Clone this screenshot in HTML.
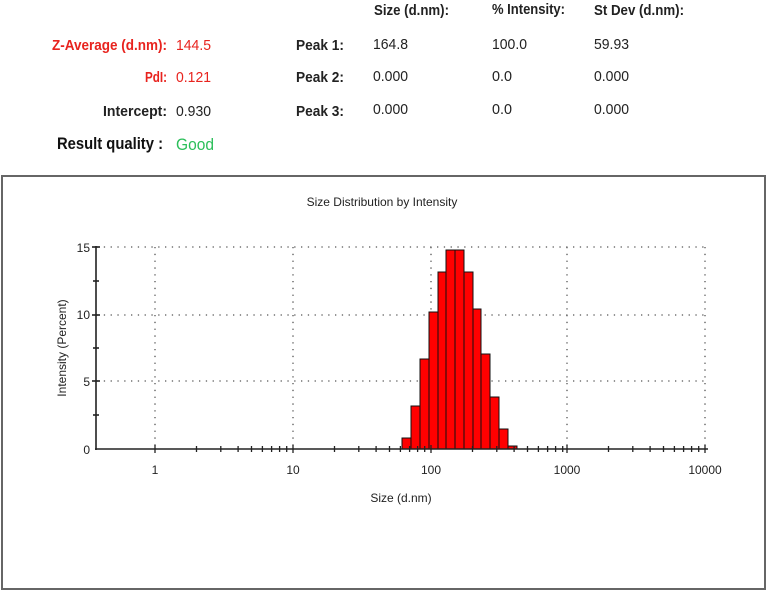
<!DOCTYPE html>
<html><head><meta charset="utf-8"><style>
html,body{margin:0;padding:0;background:#fff;width:767px;height:592px;overflow:hidden}
svg{display:block}
.t{font-family:"Liberation Sans",sans-serif;font-size:15px}
.b{font-weight:bold}
.c{font-family:"Liberation Sans",sans-serif;font-size:12px;fill:#222}
</style></head><body>
<svg width="767" height="592" viewBox="0 0 767 592" xmlns="http://www.w3.org/2000/svg">
<g class="t">
<text x="374" y="15" class="b" fill="#222" textLength="75" lengthAdjust="spacingAndGlyphs">Size (d.nm):</text>
<text x="492" y="14" class="b" fill="#222" textLength="73" lengthAdjust="spacingAndGlyphs">% Intensity:</text>
<text x="594" y="15" class="b" fill="#222" textLength="90" lengthAdjust="spacingAndGlyphs">St Dev (d.nm):</text>
<text x="52" y="50" class="b" fill="#e8231e" textLength="115" lengthAdjust="spacingAndGlyphs">Z-Average (d.nm):</text>
<text x="176" y="50" fill="#e8231e" textLength="35" lengthAdjust="spacingAndGlyphs">144.5</text>
<text x="145" y="82" class="b" fill="#e8231e" textLength="22" lengthAdjust="spacingAndGlyphs">PdI:</text>
<text x="176" y="82" fill="#e8231e" textLength="35" lengthAdjust="spacingAndGlyphs">0.121</text>
<text x="103" y="116" class="b" fill="#222" textLength="64" lengthAdjust="spacingAndGlyphs">Intercept:</text>
<text x="176" y="116" fill="#222" textLength="35" lengthAdjust="spacingAndGlyphs">0.930</text>
<text x="57" y="149" class="b" fill="#111" font-size="17" textLength="106" lengthAdjust="spacingAndGlyphs">Result quality :</text>
<text x="176" y="150" fill="#2bbf5a" font-size="17" textLength="38" lengthAdjust="spacingAndGlyphs">Good</text>
<text x="296" y="50" class="b" fill="#222" textLength="48" lengthAdjust="spacingAndGlyphs">Peak 1:</text>
<text x="296" y="82" class="b" fill="#222" textLength="48" lengthAdjust="spacingAndGlyphs">Peak 2:</text>
<text x="296" y="116" class="b" fill="#222" textLength="48" lengthAdjust="spacingAndGlyphs">Peak 3:</text>
<text x="373" y="49" fill="#222" textLength="35" lengthAdjust="spacingAndGlyphs">164.8</text><text x="492" y="49" fill="#222" textLength="35" lengthAdjust="spacingAndGlyphs">100.0</text><text x="594" y="49" fill="#222" textLength="35" lengthAdjust="spacingAndGlyphs">59.93</text>
<text x="373" y="81" fill="#222" textLength="35" lengthAdjust="spacingAndGlyphs">0.000</text><text x="492" y="81" fill="#222" textLength="20" lengthAdjust="spacingAndGlyphs">0.0</text><text x="594" y="81" fill="#222" textLength="35" lengthAdjust="spacingAndGlyphs">0.000</text>
<text x="373" y="114" fill="#222" textLength="35" lengthAdjust="spacingAndGlyphs">0.000</text><text x="492" y="114" fill="#222" textLength="20" lengthAdjust="spacingAndGlyphs">0.0</text><text x="594" y="114" fill="#222" textLength="35" lengthAdjust="spacingAndGlyphs">0.000</text>
</g>
<rect x="2" y="176" width="763" height="413" fill="none" stroke="#666" stroke-width="2"/>
<text x="382" y="206" class="c" text-anchor="middle">Size Distribution by Intensity</text>
<g stroke="#555" stroke-width="1.3" stroke-dasharray="1.3 5.5" fill="none">
<line x1="97" y1="247" x2="708" y2="247"/>
<line x1="97" y1="315" x2="708" y2="315"/>
<line x1="97" y1="381" x2="708" y2="381"/>
<line x1="155" y1="247" x2="155" y2="449"/>
<line x1="293" y1="247" x2="293" y2="449"/>
<line x1="431" y1="247" x2="431" y2="449"/>
<line x1="567" y1="247" x2="567" y2="449"/>
<line x1="705" y1="247" x2="705" y2="449"/>
</g>
<g fill="#ff0000" stroke="#111" stroke-width="1">
<rect x="402" y="438" width="9" height="11"/>
<rect x="411" y="406" width="9" height="43"/>
<rect x="420" y="359" width="9" height="90"/>
<rect x="429" y="312" width="9" height="137"/>
<rect x="438" y="272" width="8" height="177"/>
<rect x="446" y="250" width="9" height="199"/>
<rect x="455" y="250" width="9" height="199"/>
<rect x="464" y="272" width="9" height="177"/>
<rect x="473" y="309" width="8" height="140"/>
<rect x="481" y="354" width="9" height="95"/>
<rect x="490" y="397" width="9" height="52"/>
<rect x="499" y="429" width="9" height="20"/>
<rect x="508" y="446" width="9" height="3"/>
</g>
<g stroke="#222" stroke-width="1.6">
<line x1="96" y1="246" x2="96" y2="450"/>
<line x1="95" y1="449" x2="708" y2="449"/>
<line x1="92" y1="247" x2="100" y2="247"/>
<line x1="92" y1="315" x2="100" y2="315"/>
<line x1="92" y1="381" x2="100" y2="381"/>
<line x1="93" y1="281" x2="99" y2="281"/>
<line x1="93" y1="348" x2="99" y2="348"/>
<line x1="93" y1="415" x2="99" y2="415"/>
</g>
<g stroke="#222" stroke-width="1.3">
<path d="M155 445v8M196.5 446v6M220.8 446v6M238.1 446v6M251.5 446v6M262.4 446v6M271.6 446v6M279.6 446v6M286.7 446v6M293 445v8
M334.5 446v6M358.8 446v6M376.1 446v6M389.5 446v6M400.4 446v6M409.6 446v6M417.6 446v6M424.7 446v6M431 445v8
M472.5 446v6M496.8 446v6M514.1 446v6M527.5 446v6M538.4 446v6M547.6 446v6M555.6 446v6M562.7 446v6M567 445v8
M608.5 446v6M632.8 446v6M650.1 446v6M663.5 446v6M674.4 446v6M683.6 446v6M691.6 446v6M698.7 446v6M705 445v8"/>
</g>
<g class="c" text-anchor="end">
<text x="90" y="252">15</text><text x="90" y="319">10</text><text x="90" y="386">5</text><text x="90" y="454">0</text>
</g>
<g class="c" text-anchor="middle">
<text x="155" y="474">1</text><text x="293" y="474">10</text><text x="431" y="474">100</text><text x="567" y="474">1000</text><text x="705" y="474">10000</text>
<text x="401" y="502">Size (d.nm)</text>
<text transform="translate(66 348) rotate(-90)">Intensity (Percent)</text>
</g>
</svg>
</body></html>
